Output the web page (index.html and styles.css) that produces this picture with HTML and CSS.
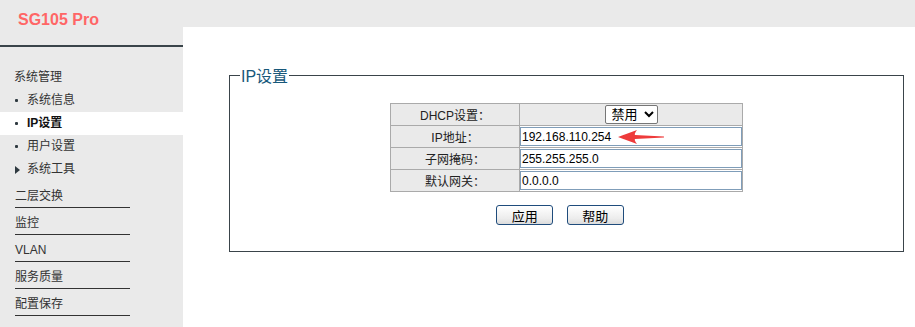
FILE: index.html
```html
<!DOCTYPE html>
<html lang="zh-CN">
<head>
  <meta charset="UTF-8" />
  <title>SG105 Pro - IP设置</title>
  <link rel="stylesheet" href="styles.css">
</head>
<body>
  <aside class="sidebar">
    <div class="logo">SG105 Pro</div>
    <ul class="menu">
      <li class="group">系统管理</li>
      <li class="sub">系统信息</li>
      <li class="sub active">IP设置</li>
      <li class="sub">用户设置</li>
      <li class="sub folder">系统工具</li>
      <li class="main">二层交换</li>
      <li class="main">监控</li>
      <li class="main">VLAN</li>
      <li class="main">服务质量</li>
      <li class="main">配置保存</li>
    </ul>
  </aside>

  <main class="content">
    <div class="topbar"></div>

    <form class="panel" onsubmit="return false;">
      <fieldset>
        <legend>IP设置</legend>

        <table class="ip-table">
          <tr>
            <td class="label">DHCP设置：</td>
            <td class="value center">
              <select id="dhcp">
                <option>禁用</option>
                <option>启用</option>
              </select>
            </td>
          </tr>
          <tr>
            <td class="label">IP地址：</td>
            <td class="value field">
              <input type="text" value="192.168.110.254" />
              <svg class="arrow" width="46" height="16" viewBox="0 0 46 16">
                <path d="M0 8 L19 1 Q16 5 17 6 L46 7.4 L46 8.6 L17 10 Q16 11 19 15 Z" fill="#ee3b3b" />
              </svg>
            </td>
          </tr>
          <tr>
            <td class="label">子网掩码：</td>
            <td class="value field"><input type="text" value="255.255.255.0" /></td>
          </tr>
          <tr>
            <td class="label">默认网关：</td>
            <td class="value field"><input type="text" value="0.0.0.0" /></td>
          </tr>
        </table>

        <div class="actions">
          <button type="button" class="btn">应用</button>
          <button type="button" class="btn">帮助</button>
        </div>
      </fieldset>
    </form>
  </main>
</body>
</html>
```

FILE: styles.css
```css
* {
  box-sizing: border-box;
}

body {
  display: flex;
  margin: 0;
  height: 100vh;
  overflow: hidden;
  font-family: "Liberation Sans", Arial, "Noto Sans CJK SC", sans-serif;
  font-size: 12px;
  color: #333;
  background-color: #fff;
}

.sidebar {
  width: 183px;
  flex-shrink: 0;
  background-color: #eaeaea;
}

.logo {
  height: 47px;
  padding: 10px 0 0 18px;
  line-height: 20px;
  font-size: 16px;
  font-weight: bold;
  color: #ff6666;
  border-bottom: 2px solid #3a444a;
}

.menu {
  list-style: none;
  margin: 0;
  padding: 19px 0 0 0;
}

.group {
  padding-left: 14px;
  line-height: 23px;
}

.sub {
  padding-left: 15px;
  line-height: 23px;
}

.sub::before {
  content: "";
  display: inline-block;
  width: 3px;
  height: 3px;
  margin-right: 9px;
  vertical-align: middle;
  background-color: #2f3a40;
  border-radius: 1px;
}

.sub.folder::before {
  width: 0;
  height: 0;
  margin-right: 7px;
  border-radius: 0;
  background: none;
  border-left: 5px solid #2f3a40;
  border-top: 4px solid transparent;
  border-bottom: 4px solid transparent;
}

.sub.active {
  background-color: #fff;
  color: #111;
  font-weight: bold;
}

.main {
  width: 115px;
  margin-left: 15px;
  padding: 6px 0 2px 0;
  line-height: 18px;
  border-bottom: 1px solid #333;
}

.content {
  flex: 1;
}

.topbar {
  height: 27px;
  background-color: #eaeaea;
}

.panel {
  margin: 36px 11px 0 46px;
}

fieldset {
  margin: 0;
  padding: 0 10px 26px 10px;
  border: 1px solid #3a444a;
}

legend {
  padding: 0 1px;
  font-size: 16px;
  color: #17587a;
}

.ip-table {
  width: 353px;
  margin: 16px auto 0 auto;
  border-collapse: collapse;
  border: 1px solid #aaa;
}

.ip-table td {
  height: 21px;
  padding: 1px 0;
  border: 1px solid #aaa;
}

.ip-table .label {
  width: 129px;
  text-align: center;
  background-color: #eaeaea;
  color: #222;
}

.ip-table .center {
  text-align: center;
  background-color: #eaeaea;
}

.field {
  position: relative;
}

.field input {
  display: block;
  width: 100%;
  height: 19px;
  padding: 0 1px;
  border: 1px solid #7f9db9;
  font-family: "Liberation Sans", Arial, sans-serif;
  font-size: 12px;
  color: #000;
  outline: none;
}

select {
  height: 19px;
  padding: 0 2px;
  font-family: "Liberation Sans", Arial, "Noto Sans CJK SC", sans-serif;
  font-size: 13px;
  color: #000;
  background-color: #fff;
  border: 1px solid #767676;
  border-radius: 2px;
}

.arrow {
  position: absolute;
  left: 98px;
  top: 3px;
}

.actions {
  margin-top: 13px;
  padding-right: 13px;
  text-align: center;
}

.btn {
  width: 57px;
  height: 20px;
  margin: 0 5px;
  padding: 0;
  font-family: "Liberation Sans", Arial, "Noto Sans CJK SC", sans-serif;
  font-size: 13px;
  color: #000;
  background: linear-gradient(#ffffff, #ececec 70%, #dcdcdc);
  border: 1px solid #1f4c7c;
  border-radius: 3px;
  cursor: pointer;
}
```
